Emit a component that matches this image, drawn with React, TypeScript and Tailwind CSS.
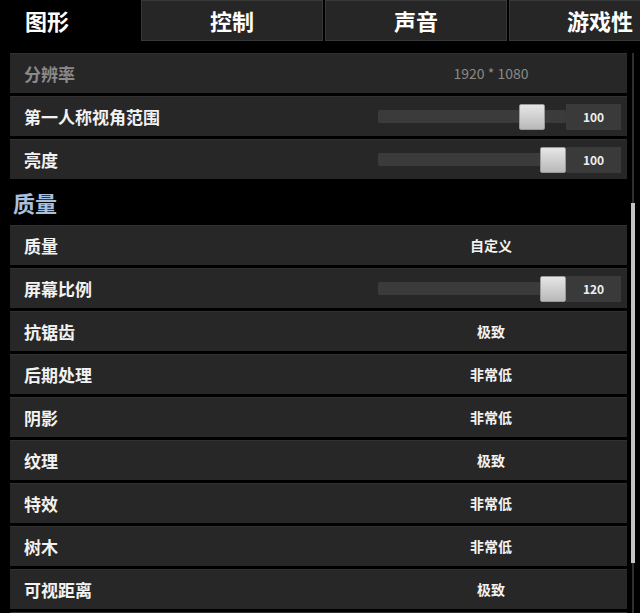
import React from "react";

const font = { fontFamily: '"Noto Sans CJK SC", "Noto Sans", sans-serif' };

type Row =
  | { kind: "value"; label: string; value: string; dim?: boolean }
  | { kind: "slider"; label: string; value: string; pos: number }
  | { kind: "header"; label: string };

const rows: Row[] = [
  { kind: "value", label: "分辨率", value: "1920 * 1080", dim: true },
  { kind: "slider", label: "第一人称视角范围", value: "100", pos: 141 },
  { kind: "slider", label: "亮度", value: "100", pos: 162 },
  { kind: "header", label: "质量" },
  { kind: "value", label: "质量", value: "自定义" },
  { kind: "slider", label: "屏幕比例", value: "120", pos: 162 },
  { kind: "value", label: "抗锯齿", value: "极致" },
  { kind: "value", label: "后期处理", value: "非常低" },
  { kind: "value", label: "阴影", value: "非常低" },
  { kind: "value", label: "纹理", value: "极致" },
  { kind: "value", label: "特效", value: "非常低" },
  { kind: "value", label: "树木", value: "非常低" },
  { kind: "value", label: "可视距离", value: "极致" },
  { kind: "value", label: "", value: "" },
];

function Slider({ value, pos }: { value: string; pos: number }) {
  return (
    <div className="flex items-center pr-[6px]">
      <div className="relative w-[188px] h-[26px] flex items-center">
        <div className="w-full h-[13px] bg-[#3b3b3b] rounded-[2px]" />
        <div
          className="absolute top-0 w-[26px] h-[26px] rounded-[2px] border border-[#9a9a9a] bg-gradient-to-b from-[#e6e6e6] to-[#b9b9b9]"
          style={{ left: pos }}
        />
      </div>
      <div className="w-[55px] h-[26px] bg-[#3a3a3a] flex items-center justify-center text-[12px] font-bold text-[#eeeeee]">
        {value}
      </div>
    </div>
  );
}

function SettingRow({ row }: { row: Row }) {
  if (row.kind === "header") {
    return (
      <div className="h-[40px] flex items-center pl-[3px] text-[22px] font-bold text-[#a9c1de]">
        {row.label}
      </div>
    );
  }
  return (
    <div className="h-[40px] flex items-center bg-[#272727] border-t border-[#313131]">
      {row.kind === "slider" ? (
        <>
          <div className="flex-1 pl-[14px] text-[17px] font-bold text-[#f2f2f2]">{row.label}</div>
          <Slider value={row.value} pos={row.pos} />
        </>
      ) : (
        <>
          <div
            className={`w-[400px] pl-[14px] text-[17px] font-bold ${
              row.dim ? "text-[#8a8a8a]" : "text-[#f2f2f2]"
            }`}
          >
            {row.label}
          </div>
          <div
            className={`w-[162px] text-center ${
              row.dim ? "text-[14px] text-[#8a8a8a]" : "text-[14px] font-bold text-[#f2f2f2]"
            }`}
          >
            {row.value}
          </div>
        </>
      )}
    </div>
  );
}

export default function App() {
  const tabs = ["控制", "声音", "游戏性"];
  return (
    <div className="w-[640px] h-[613px] bg-black overflow-hidden" style={font}>
      <div className="flex h-[41px] gap-[1px]">
        <div className="w-[140px] shrink-0 flex items-center pl-[25px] text-[22px] font-bold text-white">
          图形
        </div>
        <div className="flex gap-[2px]">
          {tabs.map((t) => (
            <div
              key={t}
              className="w-[182px] shrink-0 flex items-center justify-center bg-[#262626] border border-[#383838] text-[22px] font-bold text-white"
            >
              {t}
            </div>
          ))}
        </div>
      </div>
      <div className="flex pt-[12px]">
        <div className="ml-[10px] w-[617px] flex flex-col gap-[3px]">
          {rows.map((r, i) => (
            <SettingRow key={i} row={r} />
          ))}
        </div>
        <div className="ml-[4px] w-[4px] flex flex-col">
          <div className="h-[150px] mx-[1px] bg-[#2f2f2f]" />
          <div className="h-[360px] bg-[#c4c4c4]" />
          <div className="flex-1 mx-[1px] bg-[#2f2f2f]" />
        </div>
      </div>
    </div>
  );
}
